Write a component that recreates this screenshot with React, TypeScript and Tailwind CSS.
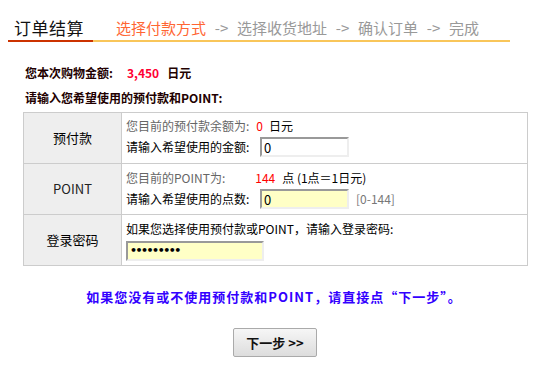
const cjk = "font-['Noto_Sans_CJK_SC','Noto_Sans',sans-serif]";

const inputBase =
  "h-[20px] border-2 border-t-[#999] border-l-[#999] border-r-[#eee] border-b-[#eee] px-[2px] leading-[16px] text-black outline-none";

function Arrow() {
  return <span className="mx-[8px] inline-block w-[15px] text-center">-&gt;</span>;
}

export default function App() {
  return (
    <div className={`h-[367px] w-[556px] bg-white text-black ${cjk}`}>
      <div className="ml-[8px] flex w-[502px] items-end pt-[18px]">
        <div className="w-[85px] border-b-2 border-[#cc3300] pb-[2px] pl-[6px] text-[17px] leading-[20px] tracking-[0.5px] text-[#111]">
          订单结算
        </div>
        <div className="flex-1 border-b-2 border-[#f9c65a] pb-[2px] pl-[23px] text-[15px] leading-[20px] text-[#999]">
          <span className="text-[#ff6633]">选择付款方式</span>
          <Arrow />
          <span>选择收货地址</span>
          <Arrow />
          <span>确认订单</span>
          <Arrow />
          <span>完成</span>
        </div>
      </div>

      <div className="mt-[24px] pl-[25px] text-[12px] font-bold leading-[14px] text-[#220000]">
        您本次购物金额:
        <span className="ml-[14px] text-[#ff0033]">3,450</span>
        <span className="ml-[8px]">日元</span>
      </div>
      <div className="mt-[11px] pl-[25px] text-[12px] font-bold leading-[14px] text-[#220000]">
        请输入您希望使用的预付款和POINT:
      </div>

      <table className="ml-[23px] mt-[7px] w-[505px] border-collapse text-[12px]">
        <tbody>
          <tr className="h-[51px]">
            <td className="w-[98px] border border-[#cccccc] bg-[#eeeeee] text-center text-[13px]">预付款</td>
            <td className="border border-[#cccccc] pl-[4px] align-top">
              <div className="mt-[6px] leading-[14px] text-[#666]">
                您目前的预付款余额为:
                <span className="ml-[7px] text-[#ff0000]">0</span>
                <span className="ml-[6px] text-black">日元</span>
              </div>
              <div className="mt-[4px] flex items-center">
                <span className="w-[134px]">请输入希望使用的金额:</span>
                <input className={`${inputBase} w-[89px] bg-white text-[13px]`} defaultValue="0" />
              </div>
            </td>
          </tr>
          <tr className="h-[51px]">
            <td className="border border-[#cccccc] bg-[#eeeeee] text-center text-[13px] text-[#222]">POINT</td>
            <td className="border border-[#cccccc] pl-[4px] align-top">
              <div className="mt-[7px] leading-[14px] text-[#666]">
                您目前的POINT为:
                <span className="ml-[30px] text-[#ff0000]">144</span>
                <span className="ml-[7px] text-black">点 (1点＝1日元)</span>
              </div>
              <div className="mt-[4px] flex items-center">
                <span className="w-[134px]">请输入希望使用的点数:</span>
                <input className={`${inputBase} w-[89px] bg-[#ffffc6] text-[13px]`} defaultValue="0" />
                <span className="ml-[7px] text-[#777]">[0-144]</span>
              </div>
            </td>
          </tr>
          <tr className="h-[51px]">
            <td className="border border-[#cccccc] bg-[#eeeeee] text-center text-[13px]">登录密码</td>
            <td className="border border-[#cccccc] pl-[4px] align-top">
              <div className="mt-[7px] leading-[14px]">如果您选择使用预付款或POINT，请输入登录密码:</div>
              <div className="mt-[4px]">
                <input
                  className={`${inputBase} w-[138px] bg-[#ffffc6] font-['DejaVu_Sans',sans-serif] text-[11px] font-bold tracking-[-1.5px]`}
                  defaultValue="•••••••••"
                />
              </div>
            </td>
          </tr>
        </tbody>
      </table>

      <div className="mt-[24px] pr-[8px] text-center text-[13px] font-bold leading-[14px] tracking-[1px] text-[#3300ff]">
        如果您没有或不使用预付款和POINT，请直接点“下一步”。
      </div>

      <div className="mt-[24px] flex justify-center pr-[6px]">
        <button className="h-[29px] w-[84px] rounded-[2px] border border-[#aaa] bg-gradient-to-b from-[#f6f6f6] to-[#dddddd] text-[13px] font-bold text-[#111]">
          下一步 &gt;&gt;
        </button>
      </div>
    </div>
  );
}
